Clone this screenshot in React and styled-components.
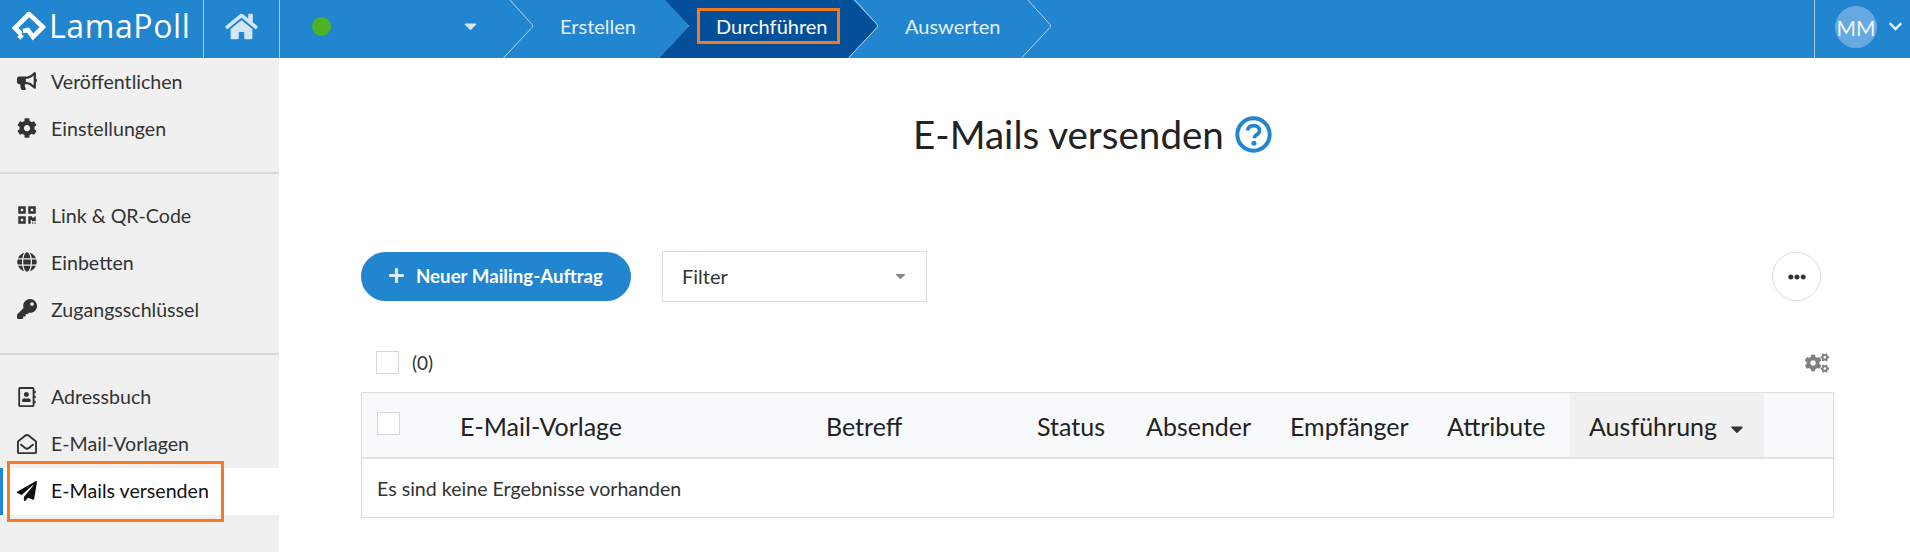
import React from "react";
import styled, { createGlobalStyle } from "styled-components";
import {
  FaBullhorn, FaCog, FaQrcode, FaGlobe, FaKey, FaRegAddressBook, FaRegEnvelopeOpen,
  FaPaperPlane, FaHome, FaPlus, FaEllipsisH, FaCogs, FaChevronDown, FaCaretDown,
} from "react-icons/fa";

const GlobalStyle = createGlobalStyle`
  html, body { margin: 0; padding: 0; height: 100%; overflow: hidden; background: #fff; }
  body { font-family: Lato, "Liberation Sans", sans-serif; color: #333; }
  * { box-sizing: border-box; }
`;

const Header = styled.header`
  display: flex;
  align-items: stretch;
  height: 58px;
  background: #2185d0;
  color: #fff;
`;

const Logo = styled.div`
  display: flex;
  align-items: center;
  gap: 3px;
  width: 204px;
  padding: 0 0 6px 12px;
  border-right: 1px solid #a5cdec;
`;

const LogoText = styled.span`
  font-family: "Open Sans", sans-serif;
  font-size: 32px;
  letter-spacing: 0.6px;
  line-height: 1;
`;

const HomeLink = styled.div`
  display: flex;
  align-items: center;
  justify-content: center;
  width: 76px;
  padding-bottom: 6px;
  border-right: 1px solid #a5cdec;
  color: #d3e6f6;
  svg { width: 33px; height: 29px; }
`;

const Steps = styled.nav`
  display: flex;
  flex: 1;
`;

const Step = styled.div`
  position: relative;
  display: flex;
  align-items: center;
  width: ${p => p.$width}px;
  padding: 0 0 6px ${p => p.$pad}px;
  font-size: 20px;
  color: ${p => (p.$active ? "#fff" : "#e3f0fa")};
  z-index: ${p => (p.$active ? 1 : 0)};
  &::before {
    content: "";
    display: ${p => (p.$active ? "block" : "none")};
    position: absolute;
    top: 0;
    bottom: 0;
    left: -30px;
    right: 0;
    background: #034f9a;
    clip-path: polygon(6px 0, 30px 26px, 0 58px, 189px 58px, 219px 26px, 194px 0);
  }
`;

const StepLabel = styled.span`
  position: relative;
`;

const Chevron = styled.svg`
  position: absolute;
  top: 0;
  right: -1px;
  width: 32px;
  height: 58px;
  fill: none;
  stroke: #b7d7f0;
  stroke-width: 1;
`;

const StatusDot = styled.span`
  width: 19px;
  height: 19px;
  border-radius: 50%;
  background: #4cb325;
`;

const StatusCaret = styled(FaCaretDown)`
  position: absolute;
  left: 182px;
  top: 16px;
  width: 17px;
  height: 20px;
  color: #d3e6f6;
`;

const Highlight = styled.span`
  position: absolute;
  top: 8px;
  left: 8px;
  width: 143px;
  height: 36px;
  border: 3px solid #f47b20;
`;

const UserMenu = styled.div`
  display: flex;
  align-items: center;
  width: 96px;
  padding: 0 0 6px 20px;
  border-left: 1px solid #a5cdec;
  gap: 11px;
  svg { width: 15px; height: 15px; color: #e3f0fa; }
`;

const Avatar = styled.span`
  display: flex;
  align-items: center;
  justify-content: center;
  width: 42px;
  height: 42px;
  margin-top: 2px;
  border-radius: 50%;
  background: #66a9e0;
  color: #f1f7fc;
  font-size: 21px;
`;

const Body = styled.div`
  display: flex;
  height: 494px;
`;

const Sidebar = styled.aside`
  width: 279px;
  flex-shrink: 0;
  background: #f0f0f0;
`;

const MenuGroup = styled.ul`
  list-style: none;
  margin: 0;
  padding: ${p => (p.$first ? "0.5px" : p.$last ? "19.5px" : "19px")} 0 19px;
  border-bottom: ${p => (p.$last ? "none" : "2px solid #d8d8d8")};
`;

const MenuItem = styled.li`
  position: relative;
  display: flex;
  align-items: center;
  height: 47px;
  font-size: 19.6px;
  color: ${p => (p.$active ? "#111" : "#333")};
  background: ${p => (p.$active ? "#fff" : "transparent")};
  border-left: ${p => (p.$active ? "3px solid #2185d0" : "none")};
  padding: 0 0 2px ${p => (p.$active ? "14px" : "17px")};
  svg { width: 20px; height: 20px; margin-right: 14px; color: ${p => (p.$active ? "#111" : "#333")}; }
`;

const SideHighlight = styled.span`
  position: absolute;
  top: -7px;
  left: 4px;
  width: 217px;
  height: 61px;
  border: 3px solid #f47b20;
`;

const Main = styled.main`
  flex: 1;
  padding: 54px 76px 0 82px;
`;

const Title = styled.h1`
  display: flex;
  align-items: center;
  justify-content: center;
  gap: 11px;
  margin: 0 0 95px;
  padding-right: 10px;
  height: 44px;
  font-size: 38.6px;
  font-weight: 400;
  color: #222;
  svg { width: 37px; height: 37px; }
`;

const Toolbar = styled.div`
  display: flex;
  align-items: center;
  padding-right: 13px;
`;

const PrimaryButton = styled.button`
  display: flex;
  align-items: center;
  gap: 11px;
  width: 270px;
  height: 49px;
  padding: 0 0 2px 27px;
  border: none;
  border-radius: 25px;
  background: #2185d0;
  color: #fff;
  font-family: inherit;
  font-size: 18.7px;
  font-weight: 700;
  svg { width: 17px; height: 17px; color: #d9eaf8; }
`;

const FilterSelect = styled.div`
  display: flex;
  align-items: center;
  justify-content: space-between;
  width: 265px;
  height: 51px;
  margin-left: 31px;
  padding: 0 19px 2px;
  border: 1px solid #ddd;
  font-size: 20px;
  color: #333;
  svg { width: 13px; height: 16px; color: #8a8a8a; }
`;

const RoundButton = styled.button`
  display: flex;
  align-items: center;
  justify-content: center;
  width: 49px;
  height: 49px;
  margin-left: auto;
  padding: 0;
  border: 1px solid #ddd;
  border-radius: 50%;
  background: #fff;
  svg { width: 18px; height: 18px; color: #333; }
`;

const SelectRow = styled.div`
  display: flex;
  align-items: center;
  gap: 13px;
  height: 23px;
  margin: 49px 0 18px;
  padding: 0 5px 0 15px;
  font-size: 19px;
  svg { margin-left: auto; width: 24px; height: 20px; color: #808080; }
`;

const Checkbox = styled.span`
  display: block;
  width: 23px;
  height: 23px;
  background: #fff;
  border: 1px solid #d8d8d8;
`;

const Table = styled.div`
  border: 1px solid #ddd;
`;

const HeadRow = styled.div`
  display: grid;
  grid-template-columns: 80px 366px 211px 109px 144px 157px 141px 194px 1fr;
  height: 66px;
  background: #f8f9fb;
  border-bottom: 2px solid #e3e3e3;
`;

const HeadCell = styled.div`
  display: flex;
  align-items: center;
  padding: 2px 0 0 ${p => (p.$sorted ? "19px" : "18px")};
  font-size: 25px;
  color: #222;
  background: ${p => (p.$sorted ? "#f0f0f0" : "transparent")};
  svg { width: 16px; height: 20px; margin: 5px 0 0 12px; color: #333; }
`;

const CheckCell = styled.div`
  display: flex;
  align-items: center;
  padding: 0 0 4px 15px;
`;

const EmptyRow = styled.div`
  display: flex;
  align-items: center;
  height: 58px;
  padding-left: 15px;
  font-size: 19.6px;
  color: #333;
`;

function LamaLogo() {
  return (
    <svg width="34" height="30" viewBox="0 0 34 30" fill="none" stroke="#fff" strokeWidth="4.6">
      <path d="M17 3 L3 17 L9 23" />
      <path d="M15 3.5 L17 3 L31 16 L21 26 L16 19 L11 20" />
      <path d="M7 24 L10 27" strokeWidth="5" />
    </svg>
  );
}

function HelpIcon() {
  return (
    <svg viewBox="0 0 37 37" fill="none">
      <circle cx="18.5" cy="18.5" r="16.2" stroke="#2185d0" strokeWidth="4" />
      <path d="M12.6 14.6c.4-3.2 2.9-5 6-5 3.3 0 5.9 2 5.9 4.9 0 2.3-1.4 3.4-3 4.4-1.5.9-2.3 1.6-2.3 3.3" stroke="#2185d0" strokeWidth="3.8" />
      <circle cx="18.9" cy="27.2" r="2.5" fill="#2185d0" />
    </svg>
  );
}

function StepChevron() {
  return (
    <Chevron viewBox="0 0 32 58">
      <path d="M7 -1 L30 24.5 Q31 26 30 27.5 L0.5 59" />
    </Chevron>
  );
}

export default function App() {
  return (
    <>
      <GlobalStyle />
      <Header>
        <Logo>
          <LamaLogo />
          <LogoText>LamaPoll</LogoText>
        </Logo>
        <HomeLink><FaHome /></HomeLink>
        <Steps>
          <Step $width={253} $pad={32}>
            <StatusDot />
            <StatusCaret />
            <StepChevron />
          </Step>
          <Step $width={156} $pad={27}>
            <StepLabel>Erstellen</StepLabel>
            <StepChevron />
          </Step>
          <Step $width={189} $pad={27} $active>
            <StepLabel>Durchführen</StepLabel>
            <Highlight />
            <StepChevron />
          </Step>
          <Step $width={173} $pad={27}>
            <StepLabel>Auswerten</StepLabel>
            <StepChevron />
          </Step>
        </Steps>
        <UserMenu>
          <Avatar>MM</Avatar>
          <FaChevronDown />
        </UserMenu>
      </Header>
      <Body>
        <Sidebar>
          <MenuGroup $first>
            <MenuItem><FaBullhorn />Veröffentlichen</MenuItem>
            <MenuItem><FaCog />Einstellungen</MenuItem>
          </MenuGroup>
          <MenuGroup>
            <MenuItem><FaQrcode />Link &amp; QR-Code</MenuItem>
            <MenuItem><FaGlobe />Einbetten</MenuItem>
            <MenuItem><FaKey />Zugangsschlüssel</MenuItem>
          </MenuGroup>
          <MenuGroup $last>
            <MenuItem><FaRegAddressBook />Adressbuch</MenuItem>
            <MenuItem><FaRegEnvelopeOpen />E-Mail-Vorlagen</MenuItem>
            <MenuItem $active>
              <FaPaperPlane />E-Mails versenden
              <SideHighlight />
            </MenuItem>
          </MenuGroup>
        </Sidebar>
        <Main>
          <Title>E-Mails versenden <HelpIcon /></Title>
          <Toolbar>
            <PrimaryButton><FaPlus />Neuer Mailing-Auftrag</PrimaryButton>
            <FilterSelect>Filter<FaCaretDown /></FilterSelect>
            <RoundButton><FaEllipsisH /></RoundButton>
          </Toolbar>
          <SelectRow>
            <Checkbox />
            (0)
            <FaCogs />
          </SelectRow>
          <Table>
            <HeadRow>
              <CheckCell><Checkbox /></CheckCell>
              <HeadCell>E-Mail-Vorlage</HeadCell>
              <HeadCell>Betreff</HeadCell>
              <HeadCell>Status</HeadCell>
              <HeadCell>Absender</HeadCell>
              <HeadCell>Empfänger</HeadCell>
              <HeadCell>Attribute</HeadCell>
              <HeadCell $sorted>Ausführung<FaCaretDown /></HeadCell>
              <div />
            </HeadRow>
            <EmptyRow>Es sind keine Ergebnisse vorhanden</EmptyRow>
          </Table>
        </Main>
      </Body>
    </>
  );
}
